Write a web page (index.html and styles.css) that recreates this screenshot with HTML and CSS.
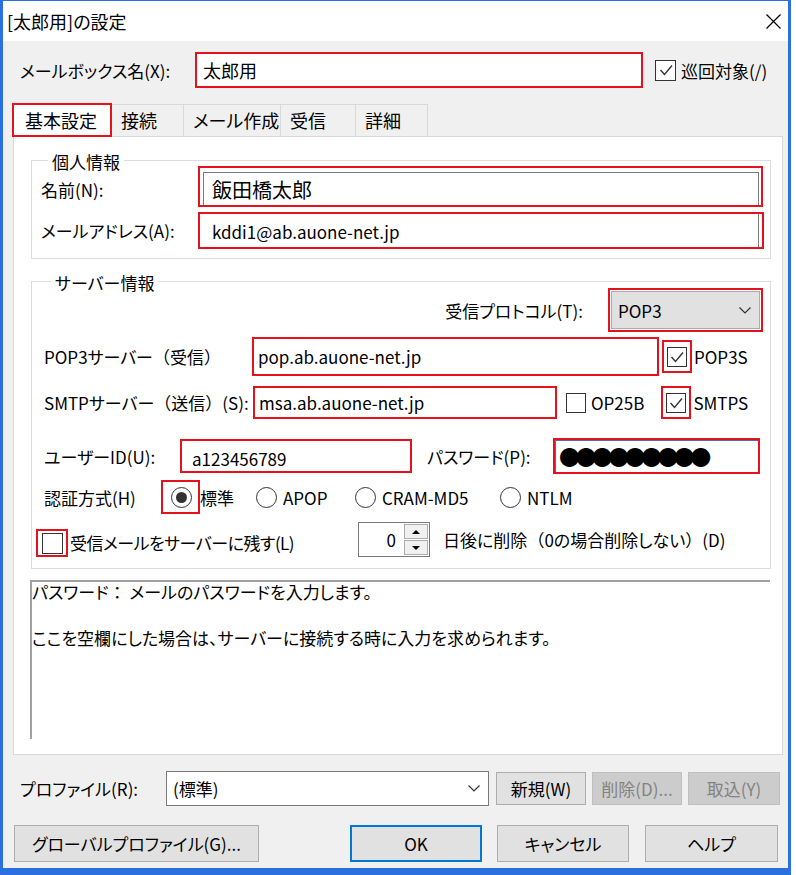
FILE: index.html
```html
<!DOCTYPE html>
<html lang="ja">
<head>
<meta charset="utf-8">
<title>[太郎用]の設定</title>
<link rel="stylesheet" href="styles.css">
</head>
<body>
<div class="dlg">
  <div class="titlebar">
    <span class="title">[太郎用]の設定</span>
    <svg class="close" width="15" height="15" viewBox="0 0 15 15"><path d="M0.5 0.5L14.5 14.5M14.5 0.5L0.5 14.5" stroke="#000" stroke-width="1.2" fill="none"/></svg>
  </div>
  <div class="content">
    <div class="row-mb">
      <span class="lbl lbl-mb">メールボックス名(X):</span>
      <div class="tb-mb">太郎用</div>
      <span class="chk chk-mb"><svg width="16" height="16" viewBox="0 0 16 16"><path d="M2.5 8L6.5 12.5L14 3.5" stroke="#333" stroke-width="1.4" fill="none"/></svg></span>
      <span class="chk-lbl">巡回対象(/)</span>
    </div>

    <div class="tabs">
      <div class="tab active">基本設定</div>
      <div class="tab w72">接続</div>
      <div class="tab w97">メール作成</div>
      <div class="tab w75">受信</div>
      <div class="tab w72">詳細</div>
    </div>

    <div class="panel">
      <div class="group g-personal">
        <div class="legend">個人情報</div>
        <div class="frow r-name">
          <span class="lbl w157 lbl-name">名前(N):</span>
          <div class="rb rb-name"><div class="tb tb-name">飯田橋太郎</div></div>
        </div>
        <div class="frow r-email">
          <span class="lbl w157">メールアドレス(A):</span>
          <div class="rb rb-email"><div class="tb tb-email">kddi1@ab.auone-net.jp</div></div>
        </div>
      </div>

      <div class="group g-server">
        <div class="legend">サーバー情報</div>
        <div class="frow r-proto">
          <span class="lbl">受信プロトコル(T):</span>
          <div class="rb rb-sel">
            <div class="sel-grey"><span>POP3</span><svg width="12" height="7" viewBox="0 0 12 7"><path d="M0.5 0.5L6 6L11.5 0.5" stroke="#333" stroke-width="1.2" fill="none"/></svg></div>
          </div>
        </div>
        <div class="frow r-pop">
          <span class="lbl w208">POP3サーバー<span class="fw">（</span>受信<span class="fw">）</span></span>
          <div class="rb rb-in w407">pop.ab.auone-net.jp</div>
          <div class="rb rb-chk"><span class="chk"><svg width="16" height="16" viewBox="0 0 16 16"><path d="M2.5 8L6.5 12.5L14 3.5" stroke="#333" stroke-width="1.4" fill="none"/></svg></span></div>
          <span class="chk-lbl2">POP3S</span>
        </div>
        <div class="frow r-smtp">
          <span class="lbl w209">SMTPサーバー<span class="fw">（</span>送信<span class="fw">）</span>(S):</span>
          <div class="rb rb-in w304">msa.ab.auone-net.jp</div>
          <span class="chk chk-op"></span>
          <span class="chk-lbl op-lbl">OP25B</span>
          <div class="rb rb-chk rb-smtps"><span class="chk"><svg width="16" height="16" viewBox="0 0 16 16"><path d="M2.5 8L6.5 12.5L14 3.5" stroke="#333" stroke-width="1.4" fill="none"/></svg></span></div>
          <span class="chk-lbl2">SMTPS</span>
        </div>
        <div class="frow r-user">
          <span class="lbl w136">ユーザーID(U):</span>
          <div class="rb rb-in rb-id">a123456789</div>
          <span class="lbl pw-lbl">パスワード(P):</span>
          <div class="rb rb-pw"><span class="dots">●●●●●●●●●</span></div>
        </div>
        <div class="frow r-auth">
          <span class="lbl w117">認証方式(H)</span>
          <div class="ropt ropt-std">
            <div class="rb rb-radio"><span class="radio on"></span></div>
            <span class="rlbl0">標準</span>
          </div>
          <div class="ropt w99"><span class="radio"></span><span class="rlbl">APOP</span></div>
          <div class="ropt w145"><span class="radio"></span><span class="rlbl">CRAM-MD5</span></div>
          <div class="ropt"><span class="radio"></span><span class="rlbl">NTLM</span></div>
        </div>
        <div class="frow r-leave">
          <div class="leave-left">
            <div class="rb rb-chk2"><span class="chk"></span></div>
            <span class="leave-lbl">受信メールをサーバーに残す(L)</span>
          </div>
          <div class="spin">
            <span class="spin-val">0</span>
            <div class="spin-btns">
              <span class="sbtn"><span class="tri-up"></span></span>
              <span class="sbtn"><span class="tri-down"></span></span>
            </div>
          </div>
          <span class="spin-lbl">日後に削除<span class="fw">（</span>0の場合削除しない<span class="fw">）</span>(D)</span>
        </div>
      </div>

      <div class="desc">
        <div>パスワード<span class="fw">：</span> メールのパスワードを入力します。</div>
        <div>&nbsp;</div>
        <div>ここを空欄にした場合は、サーバーに接続する時に入力を求められます。</div>
      </div>
    </div>

    <div class="row-prof">
      <span class="lbl prof-lbl">プロファイル(R):</span>
      <div class="prof-sel"><span>(標準)</span><svg width="12" height="7" viewBox="0 0 12 7"><path d="M0.5 0.5L6 6L11.5 0.5" stroke="#333" stroke-width="1.2" fill="none"/></svg></div>
      <button class="btn b-new">新規(W)</button>
      <button class="btn b-dis b-del">削除(D)...</button>
      <button class="btn b-dis b-imp">取込(Y)</button>
    </div>

    <div class="row-btns">
      <button class="btn b-global">グローバルプロファイル(G)...</button>
      <button class="btn b-ok">OK</button>
      <button class="btn b-cancel">キャンセル</button>
      <button class="btn b-help">ヘルプ</button>
    </div>
  </div>
</div>
</body>
</html>
```

FILE: styles.css
```css
* { box-sizing: border-box; }
html, body { margin: 0; padding: 0; background: #fff; }
body {
  font-family: "Noto Sans CJK JP", "Noto Sans", sans-serif;
  font-size: 17px;
  color: #000;
  font-feature-settings: "palt";
}
.fw { font-feature-settings: normal; }

.dlg {
  width: 791px;
  height: 875px;
  border: 3px solid #2a70e0;
  border-top-width: 1px;
  border-bottom-width: 7px;
  background: #f0f0f0;
  display: flex;
  flex-direction: column;
}
.titlebar {
  height: 40px;
  flex: none;
  background: #fff;
  display: flex;
  align-items: center;
  padding: 0 7px 0 4px;
}
.title { flex: 1; font-size: 18px; line-height: 1; }
.close { display: block; }

.content { padding: 11px 0 0 10px; }

.lbl { white-space: nowrap; flex: none; }
.rb { border: 2px solid #e3121c; flex: none; }

/* mailbox row */
.row-mb { display: flex; align-items: center; height: 36px; }
.lbl-mb { width: 182px; padding-left: 7px; }
.tb-mb {
  width: 448px; height: 36px;
  border: 2px solid #e3121c;
  background: #fff;
  padding-left: 6px;
  font-size: 18px;
  display: flex; align-items: center;
}
.chk {
  width: 21px; height: 21px;
  border: 1.5px solid #333;
  background: #fff;
  display: inline-flex; align-items: center; justify-content: center;
  flex: none;
}
.chk-mb { margin-left: 12px; }
.chk-lbl { margin-left: 5px; white-space: nowrap; }
.chk-lbl2 { margin-left: 2px; white-space: nowrap; }

/* tabs */
.tabs {
  display: flex;
  align-items: flex-start;
  height: 34px;
  margin-top: 15px;
  margin-left: -1px;
  margin-bottom: -1px;
  position: relative;
  z-index: 1;
}
.tab {
  height: 32px;
  margin-top: 1px;
  border: 1px solid #d9d9d9;
  border-left: none;
  border-bottom: none;
  background: #f0f0f0;
  padding-left: 9px;
  font-size: 18px;
  line-height: 30px;
  white-space: nowrap;
}
.tab.active {
  width: 100px;
  height: 34px;
  margin-top: 0;
  border: 2px solid #e3121c;
  background: #fff;
  padding-left: 11px;
}
.w72 { width: 72px; }
.w97 { width: 97px; }
.w75 { width: 75px; }

/* panel */
.panel {
  width: 770px;
  height: 619px;
  background: #fff;
  border: 1px solid #d9d9d9;
  padding-top: 23px;
}
.group {
  width: 740px;
  margin-left: 17px;
  border: 1px solid #dcdcdc;
}
.legend {
  width: max-content;
  height: 20px;
  line-height: 20px;
  margin: -9px 0 -7px 7px;
  padding: 0 4px;
  background: #fff;
}
.g-personal { padding: 0 0 9px 9px; }
.frow { display: flex; align-items: center; }
.w157 { width: 157px; }
.lbl-name { padding-top: 6px; }
.r-name { margin-top: 1px; }
.rb-name { width: 565px; height: 41px; padding: 4px 2px 0 3px; }
.tb { background: #fff; height: 100%; display: flex; align-items: center; white-space: nowrap; }
.tb-name { border: 1px solid #7a7a7a; border-bottom: none; padding-left: 8px; font-size: 20px; }
.r-email { margin-top: 5px; }
.rb-email { width: 566px; height: 37px; padding: 0 3px 0 0; }
.tb-email { border-right: 1px solid #7a7a7a; padding-left: 12px; padding-top: 2px; }

.g-server { margin-top: 22px; padding: 0 7px 11px 12px; }
.r-proto { justify-content: flex-end; margin-top: 2px; }
.rb-sel { width: 155px; height: 44px; padding: 1px; margin-left: 25px; }
.sel-grey {
  height: 100%;
  background: #e1e1e1;
  border: 1px solid #adadad;
  display: flex; align-items: center; justify-content: space-between;
  padding: 0 8px 0 6px;
}
.r-pop { margin-top: 5px; }
.w208 { width: 208px; }
.w209 { width: 209px; }
.rb-in {
  height: 39px;
  background: #fff;
  padding-left: 4px;
  display: flex; align-items: center;
  white-space: nowrap;
}
.w407 { width: 407px; }
.w304 { width: 304px; height: 33px; }
.rb-chk {
  width: 30px; height: 33px;
  margin-left: 3px;
  display: flex; align-items: center; justify-content: center;
}
.rb-chk .chk { width: 20px; height: 20px; }
.r-smtp { margin-top: 10px; }
.chk-op { margin-left: 9px; width: 20px; height: 20px; }
.op-lbl { margin-left: 5px; }
.rb-smtps { margin-left: 17px; }

.r-user { margin-top: 19px; }
.w136 { width: 136px; }
.rb-id { width: 232px; height: 34px; padding-left: 10px; padding-top: 5px; }
.pw-lbl { margin-left: 15px; width: 126px; }
.rb-pw {
  width: 207px; height: 36px;
  background: #fff;
  box-shadow: inset 1px 1px 0 #4a6fb8;
  display: flex; align-items: center;
  padding-left: 4px;
}
.dots { font-size: 21px; letter-spacing: -4.6px; font-feature-settings: normal; line-height: 1; }

.r-auth { margin-top: 6px; }
.w117 { width: 117px; }
.ropt { display: flex; align-items: center; flex: none; }
.ropt-std { width: 95px; }
.w99 { width: 99px; }
.w145 { width: 145px; }
.rb-radio {
  width: 39px; height: 34px;
  display: flex; align-items: center;
  padding-left: 8px;
}
.radio {
  width: 21px; height: 21px;
  border: 1.5px solid #333;
  border-radius: 50%;
  background: #fff;
  display: inline-flex; align-items: center; justify-content: center;
  flex: none;
}
.radio.on::before {
  content: "";
  width: 11px; height: 11px;
  border-radius: 50%;
  background: #333;
}
.rlbl { margin-left: 6px; white-space: nowrap; }
.rlbl0 { white-space: nowrap; }

.r-leave { margin-top: 8px; align-items: flex-end; }
.leave-left { width: 322px; margin-left: -8px; display: flex; align-items: flex-end; flex: none; }
.rb-chk2 {
  width: 32px; height: 28px;
  display: flex; align-items: center;
  padding-left: 4px;
}
.leave-lbl { margin-left: 2px; white-space: nowrap; margin-bottom: 2px; letter-spacing: -0.5px; }
.spin {
  width: 72px; height: 35px;
  border: 1px solid #7a7a7a;
  background: #fff;
  display: flex; align-items: center; justify-content: flex-end;
  flex: none;
  padding: 1px;
}
.spin-val { margin-right: 8px; }
.spin-btns { width: 24px; height: 100%; display: flex; flex-direction: column; gap: 1px; }
.sbtn {
  flex: 1;
  background: #f0f0f0;
  border: 1px solid #adadad;
  display: flex; align-items: center; justify-content: center;
}
.tri-up { width: 0; height: 0; border-left: 4px solid transparent; border-right: 4px solid transparent; border-bottom: 4px solid #000; }
.tri-down { width: 0; height: 0; border-left: 4px solid transparent; border-right: 4px solid transparent; border-top: 4px solid #000; }
.spin-lbl { margin-left: 13px; white-space: nowrap; margin-bottom: 5px; }

.desc {
  margin: 11px 0 0 16px;
  width: 740px; height: 159px;
  border-top: 2px solid #a0a0a0;
  border-left: 2px solid #a0a0a0;
  line-height: 23px;
  white-space: nowrap;
  padding-top: 0;
}
.desc div:first-child { margin-top: -2px; }

/* bottom */
.row-prof { display: flex; align-items: center; margin-top: 16px; height: 35px; }
.prof-lbl { width: 153px; padding-left: 7px; }
.prof-sel {
  width: 323px; height: 35px;
  background: #fff;
  border: 1px solid #7a7a7a;
  display: flex; align-items: center; justify-content: space-between;
  padding: 0 8px 0 6px;
  flex: none;
}
.btn {
  font-family: inherit;
  font-size: 17px;
  font-feature-settings: "palt";
  color: #000;
  background: #e1e1e1;
  border: 1px solid #adadad;
  padding: 0;
  margin: 0;
  flex: none;
  white-space: nowrap;
}
.b-new { width: 90px; height: 33px; margin-left: 7px; }
.b-del { width: 90px; height: 33px; margin-left: 6px; }
.b-imp { width: 92px; height: 33px; margin-left: 6px; }
.b-dis { background: #cccccc; border-color: #bfbfbf; color: #838383; }

.row-btns { display: flex; margin-top: 19px; }
.row-btns .btn { height: 37px; }
.b-global { width: 245px; margin-left: 1px; }
.b-ok { width: 132px; margin-left: 91px; border: 2px solid #0078d7; }
.b-cancel { width: 132px; margin-left: 15px; }
.b-help { width: 133px; margin-left: 16px; }
```
